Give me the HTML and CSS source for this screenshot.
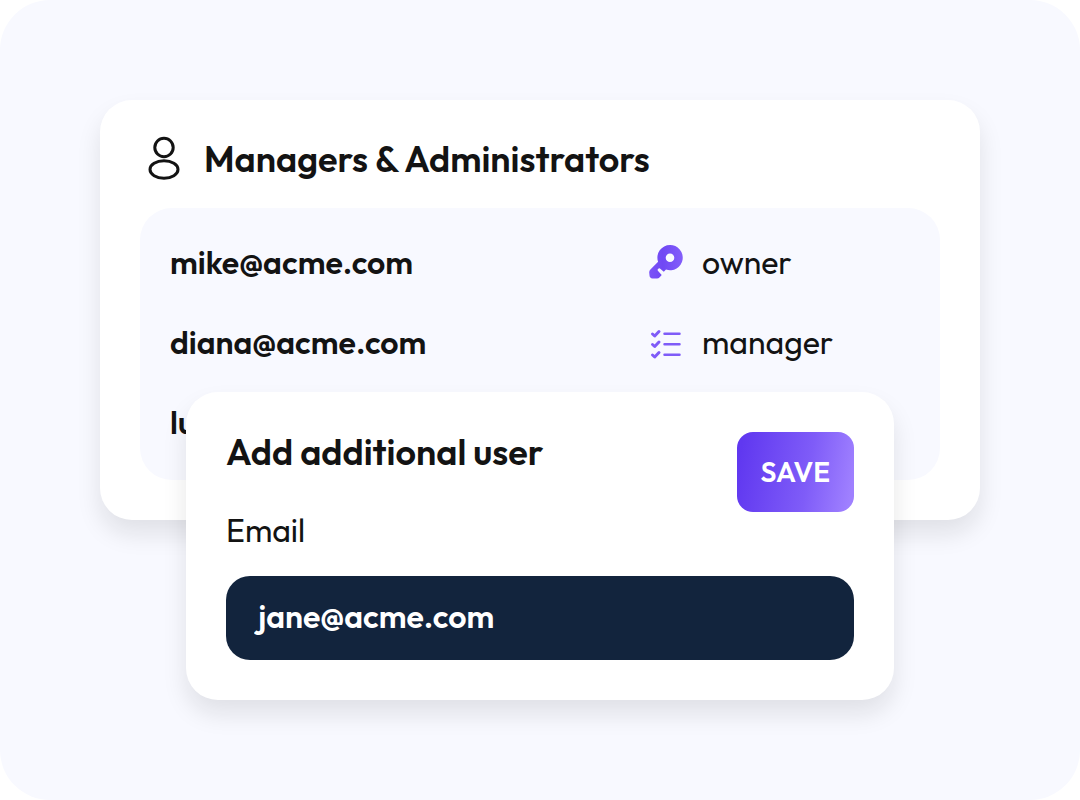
FILE: index.html
```html
<!DOCTYPE html>
<html lang="en">
<head>
    <meta charset="UTF-8">
    <meta name="viewport" content="width=device-width, initial-scale=1.0">
    <title>Managers &amp; Administrators</title>
    <link rel="stylesheet" href="styles.css">
</head>
<body>
<main class="page">
    <div class="stage">
        <section class="card">
            <header class="card-header">
                <svg class="user-icon" viewBox="0 0 48 48" aria-hidden="true">
                    <circle cx="24" cy="12.500" r="9.200"/>
                    <ellipse cx="24" cy="34.500" rx="14" ry="8.700"/>
                </svg>
                <h1>Managers &amp; Administrators</h1>
            </header>
            <div class="panel">
                <table class="users">
                    <tr>
                        <th scope="row">mike@acme.com</th>
                        <td>
                            <div class="role">
                                <svg class="role-icon" viewBox="0 0 36 36" aria-hidden="true">
                                    <defs>
                                        <linearGradient id="keyFill" x1="0" y1="0" x2="1" y2="0">
                                            <stop offset="0" stop-color="#7b54f7"/>
                                            <stop offset="0.4" stop-color="#7048f4"/>
                                            <stop offset="1" stop-color="#835efa"/>
                                        </linearGradient>
                                    </defs>
                                    <path fill="url(#keyFill)" fill-rule="evenodd" d="M22 1a12.600 12.600 0 1 1-4 24.500L15.800 27.800L12.500 24.900A1.400 1.400 0 0 0 10.100 27L13.700 31.100L11.700 33.200Q10.500 34.600 9 34.600L4.500 34.400Q1.700 34.200 1.500 31.500L1.200 28.500Q1.100 26.700 2.400 25.400L10.100 17.800A12.600 12.600 0 0 1 22 1ZM22 9.400a4.300 4.300 0 1 0 0 8.600a4.300 4.300 0 0 0 0-8.600Z"/>
                                </svg>
                                <span>owner</span>
                            </div>
                        </td>
                    </tr>
                    <tr>
                        <th scope="row">diana@acme.com</th>
                        <td>
                            <div class="role">
                                <svg class="role-icon list-icon" viewBox="0 0 36 36" aria-hidden="true">
                                    <path class="ticks" d="M4.500 10l2.200 2 4.300-4.500M4.500 20.500l2.200 2 4.300-4.500M4.500 31l2.200 2 4.300-4.500"/>
                                    <path d="M16.500 9.700h15M16.500 20.200h15M16.500 30.700h15"/>
                                </svg>
                                <span>manager</span>
                            </div>
                        </td>
                    </tr>
                    <tr>
                        <th scope="row">lu</th>
                        <td></td>
                    </tr>
                </table>
            </div>
        </section>

        <form class="dialog">
            <div class="dialog-header">
                <h2>Add additional user</h2>
                <button type="button">SAVE</button>
            </div>
            <label for="email">Email</label>
            <input type="email" id="email" value="jane@acme.com">
        </form>
    </div>
</main>
</body>
</html>
```
FILE: styles.css
```css
* {
    box-sizing: border-box;
}

body {
    margin: 0;
    background-color: #fff;
    color: #131313;
    font-family: Outfit, Lato, sans-serif;
    font-size: 32px;
    line-height: 36px;
}

.page {
    min-height: 100vh;
    padding: 100px;
    background-color: #f8f9ff;
    border-radius: 50px;
}

.stage {
    position: relative;
}

.card,
.dialog {
    background-color: #fff;
    border-radius: 32px;
    box-shadow: 0 14px 24px rgba(19, 19, 19, 0.1);
}

.card {
    padding: 32px 40px 40px;
}

.card-header {
    display: flex;
    align-items: center;
    gap: 16px;
    height: 54px;
    margin-bottom: 22px;
}

h1,
h2 {
    margin: 0;
    font-size: 36px;
    font-weight: 600;
    line-height: 40px;
}

.user-icon {
    width: 48px;
    height: 48px;
    fill: none;
    stroke: #131313;
    stroke-width: 3;
}

.panel {
    padding: 14px 30px 18px;
    background-color: #f8f9ff;
    border-radius: 32px;
}

.users {
    width: 100%;
    table-layout: fixed;
    border-collapse: collapse;
}

.users th,
.users td {
    height: 80px;
    padding: 0;
    text-align: left;
}

.users th {
    font-weight: 600;
}

.users td {
    width: 262px;
}

.role {
    display: flex;
    align-items: center;
    gap: 18px;
}

.role-icon {
    width: 36px;
    height: 36px;
}

.list-icon {
    fill: none;
    stroke: #7f5cf8;
    stroke-width: 2.5;
    stroke-linecap: round;
    stroke-linejoin: round;
}

.list-icon .ticks {
    stroke-width: 3;
}

/* Sits over the lower half of the card */
.dialog {
    position: absolute;
    top: 292px;
    left: 86px;
    right: 86px;
    padding: 40px;
}

.dialog-header {
    display: flex;
    align-items: flex-start;
    justify-content: space-between;
}

button {
    padding: 20px 24px;
    background: linear-gradient(100deg, #6038f0 5%, #7f5cf8 60%, #9f80ff 95%);
    color: #fff;
    border: none;
    border-radius: 16px;
    font-family: inherit;
    font-size: 28px;
    font-weight: 600;
    line-height: 40px;
    cursor: pointer;
}

label {
    display: block;
    margin-bottom: 28px;
}

input {
    display: block;
    width: 100%;
    height: 84px;
    padding: 0 28px 4px;
    background-color: #12243d;
    color: #fff;
    border: none;
    border-radius: 24px;
    font-family: inherit;
    font-size: 32px;
    font-weight: 600;
    text-indent: 4px;
}
```
